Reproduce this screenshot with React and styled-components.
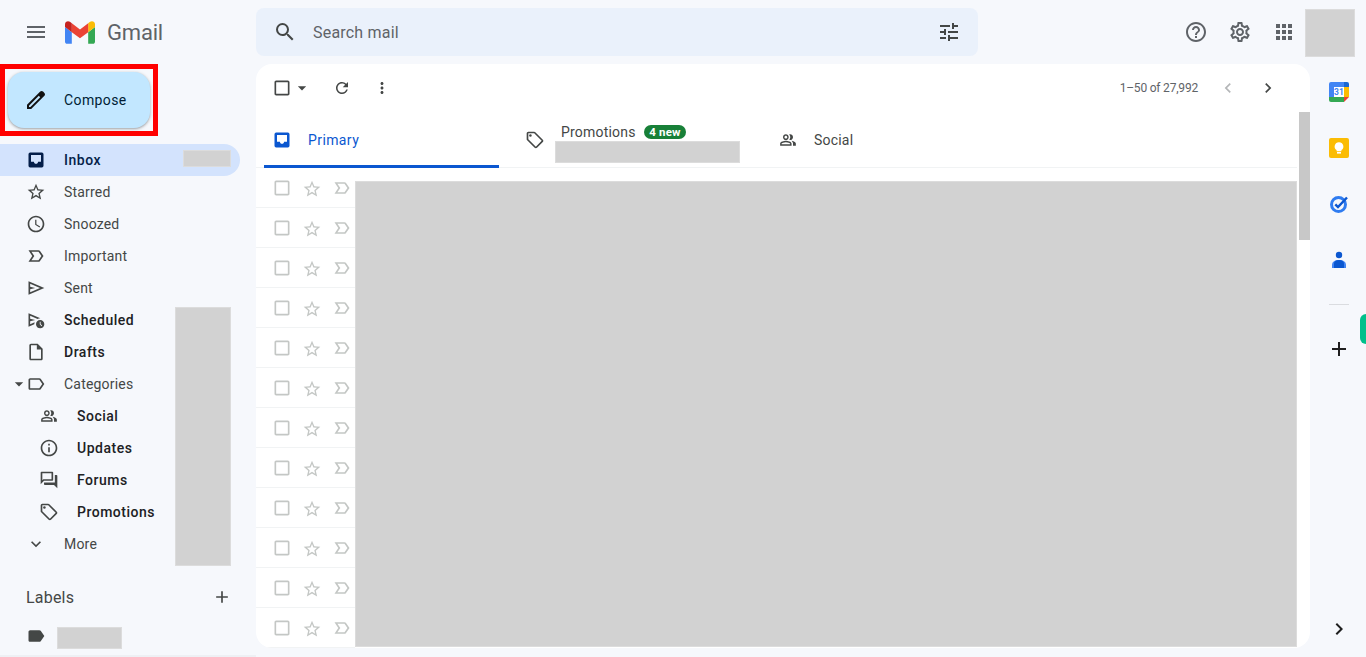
import React from "react";
import styled, { createGlobalStyle } from "styled-components";
import {
  MdMenu,
  MdSearch,
  MdTune,
  MdHelpOutline,
  MdOutlineSettings,
  MdApps,
  MdStarBorder,
  MdAccessTime,
  MdOutlineScheduleSend,
  MdOutlineInsertDriveFile,
  MdOutlineLabel,
  MdOutlinePeopleAlt,
  MdInfoOutline,
  MdOutlineForum,
  MdOutlineLocalOffer,
  MdExpandMore,
  MdAdd,
  MdLabel,
  MdCheckBoxOutlineBlank,
  MdArrowDropDown,
  MdRefresh,
  MdMoreVert,
  MdChevronLeft,
  MdChevronRight,
} from "react-icons/md";

const GlobalStyle = createGlobalStyle`
  html, body {
    margin: 0;
    padding: 0;
    background: #f6f8fc;
    font-family: Roboto, "Liberation Sans", Arial, sans-serif;
  }
  * { box-sizing: border-box; }
`;

const Page = styled.div`
  width: 1366px;
  height: 657px;
  overflow: hidden;
  display: flex;
  flex-direction: column;
  background: #f6f8fc;
`;

// top bar
const Header = styled.header`
  height: 64px;
  flex: none;
  display: flex;
  align-items: flex-start;
`;

const Brand = styled.div`
  width: 256px;
  height: 64px;
  flex: none;
  display: flex;
  align-items: center;
  padding-left: 24px;
  color: #5f6368;
`;

const BrandMark = styled.svg`
  width: 30px;
  height: 23px;
  margin-left: 17px;
  margin-right: 12px;
`;

const BrandName = styled.span`
  font-size: 22px;
  letter-spacing: -0.2px;
  color: #5f6368;
`;

const SearchBar = styled.div`
  width: 722px;
  height: 48px;
  margin-top: 8px;
  display: flex;
  align-items: center;
  gap: 16px;
  padding: 0 17px;
  border-radius: 8px;
  background: #eaf1fb;
  color: #444746;
`;

const SearchText = styled.span`
  flex: 1;
  font-size: 16px;
  color: #5f6368;
  letter-spacing: 0.2px;
`;

const Actions = styled.div`
  margin-left: auto;
  display: flex;
  align-items: flex-start;
  padding-right: 11px;
`;

const ActionButton = styled.div`
  width: 40px;
  height: 40px;
  margin: 12px 4px 0 0;
  display: flex;
  align-items: center;
  justify-content: center;
  color: #5f6368;
  &:nth-child(3) { margin-right: 1px; }
`;

const Redacted = styled.div`
  background: #d2d2d2;
  border: 1px solid #dcdcdc;
`;

const Avatar = styled(Redacted)`
  width: 50px;
  height: 48px;
  margin-top: 9px;
`;

const Body = styled.div`
  flex: 1;
  display: flex;
  min-height: 0;
`;

// left column
const Sidebar = styled.nav`
  width: 256px;
  flex: none;
  position: relative;
  overflow: hidden;
  border-bottom: 2px solid #eef0f4;
`;

const ComposeFrame = styled.div`
  width: 158px;
  height: 72px;
  padding: 3px;
  margin-bottom: 8px;
  border: 5px solid #ff0000;
`;

const ComposeButton = styled.div`
  height: 56px;
  display: flex;
  align-items: center;
  gap: 16px;
  padding-left: 16px;
  border-radius: 16px;
  background: #c2e7ff;
  color: #001d35;
  font-size: 14px;
  letter-spacing: 0.4px;
  box-shadow: 0 1px 2px rgba(60, 64, 67, 0.3), 0 1px 3px 1px rgba(60, 64, 67, 0.15);
  svg { color: #111; }
`;

const NavRow = styled.div`
  width: 240px;
  height: 32px;
  display: flex;
  align-items: center;
  padding-left: ${(p) => p.$inset || 26}px;
  border-radius: 0 16px 16px 0;
  font-size: 14px;
  letter-spacing: ${(p) => (p.$bold ? 0.5 : 0.2)}px;
  font-weight: ${(p) => (p.$bold ? 500 : 400)};
  color: ${(p) => (p.$active ? "#041e49" : p.$bold ? "#202124" : "#444746")};
  background: ${(p) => (p.$active ? "#d3e3fd" : "transparent")};
  svg { flex: none; color: ${(p) => (p.$active ? "#041e49" : "#444746")}; }
  svg + svg { margin-left: -3px; }
`;

const NavLabel = styled.span`
  margin-left: 18px;
`;

const LabelsHeader = styled.div`
  width: 240px;
  height: 32px;
  margin-top: 21px;
  display: flex;
  align-items: center;
  justify-content: space-between;
  padding: 0 8px 0 26px;
  font-size: 16px;
  letter-spacing: 0.2px;
  color: #444746;
`;

const InboxCount = styled(Redacted)`
  position: absolute;
  left: 183px;
  top: 86px;
  width: 48px;
  height: 17px;
`;

const CountColumn = styled(Redacted)`
  position: absolute;
  left: 175px;
  top: 243px;
  width: 56px;
  height: 259px;
`;

const LabelRow = styled(NavRow)`
  margin-top: 7px;
`;

const LabelName = styled(Redacted)`
  width: 65px;
  height: 22px;
  margin: 4px 0 0 11px;
`;

// white message panel
const Panel = styled.main`
  width: 1054px;
  margin-bottom: 9px;
  flex: none;
  position: relative;
  display: flex;
  flex-direction: column;
  overflow: hidden;
  border-radius: 16px;
  background: #fff;
`;

const Toolbar = styled.div`
  height: 48px;
  flex: none;
  display: flex;
  align-items: center;
  padding: 0 32px 0 16px;
  color: #444746;
`;

const ToolButton = styled.div`
  width: 20px;
  height: 20px;
  margin-left: ${(p) => p.$gap || 0}px;
  display: flex;
  align-items: center;
  justify-content: center;
  color: ${(p) => (p.$muted ? "#b4b6b8" : "#444746")};
`;

const PageCount = styled.span`
  margin-left: auto;
  margin-right: 20px;
  font-size: 12px;
  letter-spacing: -0.2px;
  color: #5f6368;
`;

const TabBar = styled.div`
  height: 56px;
  flex: none;
  display: flex;
  gap: 18px;
  padding-left: 8px;
  margin-right: 13px;
  border-bottom: 1px solid #f1f3f4;
`;

const Tab = styled.div`
  width: 235px;
  height: 56px;
  display: flex;
  align-items: center;
  gap: 16px;
  padding: 2px 0 0 8px;
  font-size: 14px;
  letter-spacing: ${(p) => (p.$active ? 0.4 : 0.2)}px;
  color: ${(p) => (p.$active ? "#0b57d0" : "#444746")};
  border-bottom: 3px solid ${(p) => (p.$active ? "#0b57d0" : "transparent")};
  svg { flex: none; }
`;

const TabStack = styled.div`
  display: flex;
  flex-direction: column;
  margin-top: 7px;
`;

const TabTitle = styled.div`
  display: flex;
  align-items: center;
  gap: 8px;
  height: 18px;
`;

const NewBadge = styled.span`
  height: 14px;
  padding: 0 5.5px;
  display: flex;
  align-items: center;
  border-radius: 8px;
  background: #188038;
  color: #fff;
  font-size: 11.5px;
  font-weight: 700;
`;

const TabPreview = styled(Redacted)`
  width: 185px;
  height: 22px;
  margin-left: -6px;
`;

const MailList = styled.div`
  flex: 1;
  position: relative;
  overflow: hidden;
`;

const MailRow = styled.div`
  width: 99px;
  height: 40px;
  display: flex;
  align-items: center;
  gap: 10px;
  padding-left: 16px;
  border-bottom: 1px solid #f1f3f4;
  color: #c4c7c5;
  svg { flex: none; }
  svg:nth-child(2) { margin-top: 2px; }
`;

const MailBlock = styled(Redacted)`
  position: absolute;
  left: 99px;
  right: 13px;
  top: 13px;
  bottom: 1px;
`;

const ScrollThumb = styled.div`
  position: absolute;
  top: 48px;
  right: 0;
  width: 11px;
  height: 128px;
  background: #c8c8c8;
`;

// add-on rail
const Rail = styled.aside`
  flex: 1;
  position: relative;
  display: flex;
  flex-direction: column;
  align-items: center;
  padding-left: 2px;
`;

const RailItem = styled.div`
  height: 56px;
  flex: none;
  display: flex;
  align-items: center;
  justify-content: center;
`;

const RailDivider = styled.div`
  width: 20px;
  height: 1px;
  margin-top: 16px;
  background: #dadce0;
`;

const RailAdd = styled.div`
  margin-top: 32px;
  height: 24px;
  color: #1f1f1f;
`;

const RailToggle = styled.div`
  margin-top: auto;
  margin-bottom: 16px;
  height: 24px;
  color: #1f1f1f;
`;

const RailHandle = styled.div`
  position: absolute;
  top: 250px;
  right: 0;
  width: 6px;
  height: 30px;
  border-radius: 6px 0 0 6px;
  background: #00c08b;
`;

// material paths the icon package draws differently
const MaterialIcon = ({ d, size = 20 }) => (
  <svg width={size} height={size} viewBox="0 0 24 24" fill="currentColor">
    <path fillRule="evenodd" d={d} />
  </svg>
);

const InboxIcon = () => (
  <MaterialIcon d="M19 3H5a2 2 0 0 0-2 2v14a2 2 0 0 0 2 2h14a2 2 0 0 0 2-2V5a2 2 0 0 0-2-2zm-1 11h-3.5c0 1.4-1.1 2.5-2.5 2.5S9.5 15.4 9.5 14H6V6h12z" />
);

const ImportantIcon = () => (
  <MaterialIcon d="M15 19H3l4.5-7L3 5h12c.65 0 1.26.31 1.63.84L21 12l-4.37 6.16c-.37.52-.98.84-1.63.84zm-8.5-2H15l3.5-5L15 7H6.5l3.5 5-3.5 5z" />
);

const SentIcon = () => (
  <MaterialIcon d="M3 20V4l19 8-19 8zm2-3l11.85-5L5 7v3.5l6 1.5-6 1.5V17z" />
);

const PencilIcon = () => (
  <MaterialIcon
    size={24}
    d="M20.41 4.94l-1.35-1.35c-.78-.78-2.05-.78-2.83 0L3 16.82V21h4.18L20.41 7.77c.79-.78.79-2.05 0-2.83zm-14 14.12L5 19v-1.36l9.82-9.82 1.41 1.41-9.82 9.83z"
  />
);

// same 20px box, the drawing sits a bit smaller in it
const PeopleIcon = () => <MdOutlinePeopleAlt size={20} viewBox="-2 -2 28 28" />;

const navTop = [
  { icon: MdStarBorder, label: "Starred" },
  { icon: MdAccessTime, label: "Snoozed" },
  { icon: ImportantIcon, label: "Important" },
  { icon: SentIcon, label: "Sent" },
  { icon: MdOutlineScheduleSend, label: "Scheduled", bold: true },
  { icon: MdOutlineInsertDriveFile, label: "Drafts", bold: true },
];

const categories = [
  { icon: PeopleIcon, label: "Social" },
  { icon: MdInfoOutline, label: "Updates" },
  { icon: MdOutlineForum, label: "Forums" },
  { icon: MdOutlineLocalOffer, label: "Promotions" },
];

const mailRows = Array.from({ length: 12 }, (_, i) => i);

function GmailLogo() {
  return (
    <BrandMark viewBox="52 42 88 66">
      <path fill="#4285f4" d="M58 108h14V74L52 59v43c0 3.32 2.69 6 6 6" />
      <path fill="#34a853" d="M120 108h14c3.32 0 6-2.69 6-6V59l-20 15" />
      <path fill="#fbbc04" d="M120 48v26l20-15v-8c0-7.42-8.47-11.65-14.4-7.2" />
      <path fill="#ea4335" d="M72 74V48l24 18 24-18v26L96 92" />
      <path fill="#c5221f" d="M52 51v8l20 15V48l-5.6-4.2c-5.94-4.45-14.4-.22-14.4 7.2" />
    </BrandMark>
  );
}

function CalendarIcon() {
  return (
    <svg width="20" height="20" viewBox="0 0 20 20">
      <path fill="#4285f4" d="M2 0h13v5H5v10H0V2a2 2 0 0 1 2-2z" />
      <path fill="#fbbc04" d="M15 5h5v10h-5z" />
      <path fill="#34a853" d="M0 15h15v5H2a2 2 0 0 1-2-2z" />
      <path fill="#1967d2" d="M15 0h3a2 2 0 0 1 2 2v3h-5z" />
      <path fill="#ea4335" d="M15 15h5l-5 5z" />
      <rect x="5" y="5" width="10" height="10" fill="#fff" />
      <text x="10" y="13.2" textAnchor="middle" fontSize="8.5" fontWeight="700" fontFamily="Roboto, sans-serif" fill="#4285f4">31</text>
    </svg>
  );
}

function KeepIcon() {
  return (
    <svg width="20" height="20" viewBox="0 0 20 20">
      <rect width="20" height="20" rx="2" fill="#fbbc04" />
      <path fill="#fff" d="M10 4.2a4.3 4.3 0 0 0-2.4 7.9v1.2h4.8v-1.2A4.3 4.3 0 0 0 10 4.2z" />
      <rect x="8" y="14" width="4" height="1.6" fill="#fff" />
    </svg>
  );
}

function TasksIcon() {
  return (
    <svg width="20" height="20" viewBox="0 0 20 20">
      <circle cx="9.5" cy="10.5" r="7" fill="none" stroke="#2f7cf0" strokeWidth="3" />
      <path fill="none" stroke="#0b57d0" strokeWidth="2.4" d="M6.3 10.3l2.7 2.7 9-9.5" />
    </svg>
  );
}

function ContactsIcon() {
  return (
    <svg width="20" height="20" viewBox="0 0 20 20">
      <circle cx="10" cy="5" r="3.2" fill="#0b57d0" />
      <path fill="#4285f4" d="M3 15c0-3 2.5-5 7-5s7 2 7 5v3H3z" />
      <path fill="#0b57d0" d="M5 18v-4.5c0-2 2-3.5 5-3.5s5 1.5 5 3.5V18z" />
    </svg>
  );
}

export default function App() {
  return (
    <Page>
      <GlobalStyle />
      <Header>
        <Brand>
          <MdMenu size={24} />
          <GmailLogo />
          <BrandName>Gmail</BrandName>
        </Brand>
        <SearchBar>
          <MdSearch size={24} />
          <SearchText>Search mail</SearchText>
          <MdTune size={24} />
        </SearchBar>
        <Actions>
          <ActionButton><MdHelpOutline size={24} /></ActionButton>
          <ActionButton><MdOutlineSettings size={24} /></ActionButton>
          <ActionButton><MdApps size={24} /></ActionButton>
          <Avatar />
        </Actions>
      </Header>

      <Body>
        <Sidebar>
          <ComposeFrame>
            <ComposeButton>
              <PencilIcon />
              Compose
            </ComposeButton>
          </ComposeFrame>

          <NavRow $active $bold>
            <InboxIcon />
            <NavLabel>Inbox</NavLabel>
          </NavRow>
          {navTop.map((item) => (
            <NavRow key={item.label} $bold={item.bold}>
              <item.icon size={20} />
              <NavLabel>{item.label}</NavLabel>
            </NavRow>
          ))}
          <NavRow $inset={9}>
            <MdArrowDropDown size={20} />
            <MdOutlineLabel size={20} />
            <NavLabel>Categories</NavLabel>
          </NavRow>
          {categories.map((item) => (
            <NavRow key={item.label} $inset={39} $bold>
              <item.icon size={20} />
              <NavLabel>{item.label}</NavLabel>
            </NavRow>
          ))}
          <NavRow>
            <MdExpandMore size={20} />
            <NavLabel>More</NavLabel>
          </NavRow>

          <LabelsHeader>
            Labels
            <MdAdd size={20} />
          </LabelsHeader>
          <LabelRow>
            <MdLabel size={20} />
            <LabelName />
          </LabelRow>

          <InboxCount />
          <CountColumn />
        </Sidebar>

        <Panel>
          <Toolbar>
            <ToolButton><MdCheckBoxOutlineBlank size={20} /></ToolButton>
            <ToolButton><MdArrowDropDown size={20} /></ToolButton>
            <ToolButton $gap={20}><MdRefresh size={18} /></ToolButton>
            <ToolButton $gap={20}><MdMoreVert size={18} /></ToolButton>
            <PageCount>1–50 of 27,992</PageCount>
            <ToolButton $muted><MdChevronLeft size={20} /></ToolButton>
            <ToolButton $gap={20}><MdChevronRight size={20} /></ToolButton>
          </Toolbar>

          <TabBar>
            <Tab $active>
              <InboxIcon />
              Primary
            </Tab>
            <Tab>
              <MdOutlineLocalOffer size={20} />
              <TabStack>
                <TabTitle>
                  Promotions
                  <NewBadge>4 new</NewBadge>
                </TabTitle>
                <TabPreview />
              </TabStack>
            </Tab>
            <Tab>
              <PeopleIcon />
              Social
            </Tab>
          </TabBar>

          <MailList>
            {mailRows.map((i) => (
              <MailRow key={i}>
                <MdCheckBoxOutlineBlank size={20} />
                <MdStarBorder size={20} />
                <ImportantIcon />
              </MailRow>
            ))}
            <MailBlock />
          </MailList>
          <ScrollThumb />
        </Panel>

        <Rail>
          <RailItem><CalendarIcon /></RailItem>
          <RailItem><KeepIcon /></RailItem>
          <RailItem><TasksIcon /></RailItem>
          <RailItem><ContactsIcon /></RailItem>
          <RailDivider />
          <RailAdd><MdAdd size={24} /></RailAdd>
          <RailToggle><MdChevronRight size={24} /></RailToggle>
          <RailHandle />
        </Rail>
      </Body>
    </Page>
  );
}
